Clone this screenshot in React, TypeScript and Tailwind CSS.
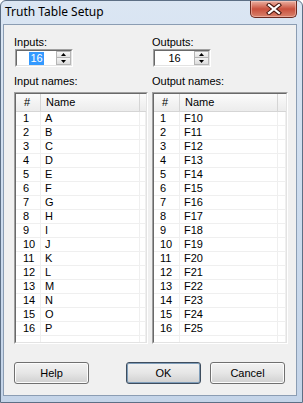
import React from 'react';

const inputNames = ['A', 'B', 'C', 'D', 'E', 'F', 'G', 'H', 'I', 'J', 'K', 'L', 'M', 'N', 'O', 'P'];
const outputNames = Array.from({ length: 16 }, (_, i) => `F${i + 10}`);

function CloseButton() {
  return (
    <div className="w-[47px] h-[17px] rounded-b-[5px] border border-t-0 border-[#6b2a20] bg-gradient-to-b from-[#e9b0a2] via-[#c9503d] to-[#d8826c] flex items-center justify-center shadow-[inset_0_0_0_1px_rgba(255,220,210,0.45)]">
      <svg width="16" height="12" viewBox="0 0 16 12">
        <path d="M3 2 L13 10 M13 2 L3 10" stroke="#4a1810" strokeWidth="4.2" strokeLinecap="square" />
        <path d="M3 2 L13 10 M13 2 L3 10" stroke="#ffffff" strokeWidth="2.2" strokeLinecap="square" />
      </svg>
    </div>
  );
}

function Arrow({ up }: { up?: boolean }) {
  return (
    <svg width="5" height="3" viewBox="0 0 5 3">
      <path d={up ? 'M2.5 0 L5 3 L0 3 Z' : 'M0 0 L5 0 L2.5 3 Z'} fill="#000" />
    </svg>
  );
}

function Spinner({ value, selected }: { value: string; selected?: boolean }) {
  return (
    <div className="ml-[1px] w-[58px] h-[18px] border border-t-[#a0a0a0] border-l-[#a0a0a0] border-b-white border-r-white">
      <div className="h-full flex border border-t-[#696969] border-l-[#696969] border-b-[#e3e3e3] border-r-[#e3e3e3] bg-white">
        <div className="flex-1 flex items-center justify-center">
          <span className={selected ? 'bg-[#3399ff] text-white h-[13px] leading-[13px] px-[1px]' : 'leading-[13px] h-[13px] px-[1px]'}>{value}</span>
        </div>
        <div className="w-[15px] flex flex-col">
          <div className="h-[7px] flex items-center justify-center border border-[#b5b5b5] bg-gradient-to-b from-[#f8f8f8] to-[#e2e2e2]">
            <Arrow up />
          </div>
          <div className="h-[7px] flex items-center justify-center border border-t-0 border-[#b5b5b5] bg-gradient-to-b from-[#f3f3f3] to-[#dcdcdc]">
            <Arrow />
          </div>
        </div>
      </div>
    </div>
  );
}

function NameTable({ rows, numW, nameW, extraW, numPad }: { rows: string[]; numW: number; nameW: number; extraW: number; numPad: string }) {
  const numCls = numW === 25 ? 'w-[25px]' : 'w-[26px]';
  const nameCls = nameW === 99 ? 'w-[99px]' : 'w-[98px]';
  const extraCls = extraW === 6 ? 'w-[6px]' : 'w-[8px]';
  return (
    <div className="h-[252px] border border-t-[#a0a0a0] border-l-[#a0a0a0] border-b-white border-r-white">
      <div className="h-full flex flex-col border border-t-[#696969] border-l-[#696969] border-b-[#e3e3e3] border-r-[#e3e3e3] bg-white">
        <div className="h-[18px] flex bg-gradient-to-b from-[#fbfbfb] to-[#ececec] border-b border-[#d5d5d5]">
          <div className={`${numCls} shrink-0 border-r border-[#d5d5d5] pl-[8px] leading-[17px]`}>#</div>
          <div className={`${nameCls} shrink-0 border-r border-[#d5d5d5] pl-[5px] leading-[17px]`}>Name</div>
          <div className="flex-1" />
        </div>
        {rows.map((name, i) => (
          <div key={i} className="h-[14px] flex border-b border-[#efefef]">
            <div className={`${numCls} shrink-0 border-r border-[#efefef] ${numPad} leading-[13px]`}>{i + 1}</div>
            <div className={`${nameCls} shrink-0 border-r border-[#efefef] pl-[4px] leading-[13px]`}>{name}</div>
            <div className={`${extraCls} shrink-0 border-r border-[#efefef]`} />
          </div>
        ))}
        <div className="flex-1 flex">
          <div className={`${numCls} shrink-0 border-r border-[#efefef]`} />
          <div className={`${nameCls} shrink-0 border-r border-[#efefef]`} />
          <div className={`${extraCls} shrink-0 border-r border-[#efefef]`} />
        </div>
      </div>
    </div>
  );
}

function Button({ label, isDefault }: { label: string; isDefault?: boolean }) {
  return (
    <div
      className={
        'w-[75px] h-[22px] rounded-[3px] border flex items-center justify-center bg-gradient-to-b from-[#f2f2f2] via-[#e6e6e6] to-[#d0d0d0] ' +
        (isDefault
          ? 'border-[#3e4d5e] shadow-[inset_0_0_0_1px_#7f9db9]'
          : 'border-[#707070] shadow-[inset_0_0_0_1px_#fcfcfc]')
      }
    >
      {label}
    </div>
  );
}

export default function App() {
  return (
    <div className="w-[303px] h-[403px] flex flex-col border border-[#5d6f85] rounded-t-[6px] bg-gradient-to-b from-[#dbe6f3] via-[#cddcee] to-[#c4d4e8] overflow-hidden font-['Liberation_Sans',Arial,sans-serif] text-[11px] text-black">
      <div className="h-[23px] flex items-start justify-between">
        <div className="pl-[4px] pt-[3px] text-[12px] leading-[16px] font-['Noto_Sans','Open_Sans',sans-serif] text-black">Truth Table Setup</div>
        <div className="mr-[5px]">
          <CloseButton />
        </div>
      </div>
      <div className="ml-[2px] w-[294px] h-[372px] border border-[#8b9db3] bg-[#f0f0f0] flex flex-col px-[10px] pt-[11px] pb-[11px]">
        <div className="flex gap-[4px]">
          <div className="w-[134px] flex flex-col">
            <div className="h-[13px] leading-[13px]">Inputs:</div>
            <Spinner value="16" selected />
            <div className="h-[13px] leading-[13px] mt-[8px]">Input names:</div>
            <div className="mt-[4px]">
              <NameTable rows={inputNames} numW={25} nameW={99} extraW={6} numPad="pl-[7px]" />
            </div>
          </div>
          <div className="w-[136px] flex flex-col">
            <div className="h-[13px] leading-[13px]">Outputs:</div>
            <Spinner value="16" />
            <div className="h-[13px] leading-[13px] mt-[8px]">Output names:</div>
            <div className="mt-[4px]">
              <NameTable rows={outputNames} numW={26} nameW={98} extraW={8} numPad="pl-[6px]" />
            </div>
          </div>
        </div>
        <div className="mt-[18px] flex justify-between pr-[1px]">
          <Button label="Help" />
          <div className="flex gap-[9px]">
            <Button label="OK" isDefault />
            <Button label="Cancel" />
          </div>
        </div>
      </div>
    </div>
  );
}
